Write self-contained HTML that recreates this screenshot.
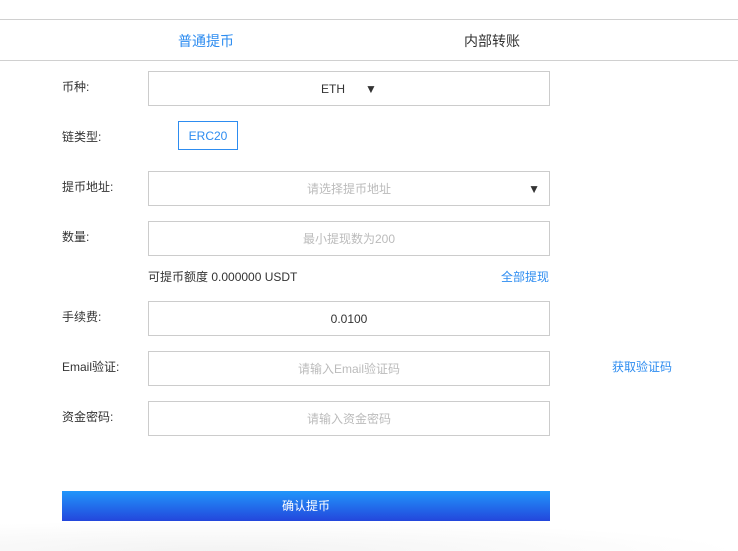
<!DOCTYPE html>
<html><head><meta charset="utf-8"><style>
*{margin:0;padding:0;box-sizing:border-box}
body{width:738px;height:551px;background:#fff;font-family:"Liberation Sans","Noto Sans CJK SC",sans-serif;position:relative;overflow:hidden;color:#333}
.a{position:absolute}
.line{left:0;width:738px;height:1px;background:#d0d0d0}
.lbl{left:62px;font-size:12px;color:#333}
.inp{left:148px;width:402px;height:35px;border:1px solid #ccc;font-size:12px;color:#bbb;text-align:center;line-height:34px}
</style></head><body>
<div class="a line" style="top:19px"></div>
<div class="a line" style="top:60px"></div>
<div class="a" style="left:178px;top:31px;font-size:14px;color:#2d8cf0">普通提币</div>
<div class="a" style="left:464px;top:31px;font-size:14px;color:#333">内部转账</div>

<div class="a lbl" style="top:78px">币种:</div>
<div class="a inp" style="top:71px;color:#333">ETH &nbsp;&nbsp;&nbsp;&nbsp;&nbsp;▼</div>

<div class="a lbl" style="top:128px">链类型:</div>
<div class="a" style="left:178px;top:121px;width:60px;height:29px;border:1px solid #2d8cf0;color:#2d8cf0;font-size:12px;text-align:center;line-height:28px">ERC20</div>

<div class="a lbl" style="top:178px">提币地址:</div>
<div class="a inp" style="top:171px">请选择提币地址<span class="a" style="right:9px;top:0;color:#333;font-size:12px">▼</span></div>

<div class="a lbl" style="top:228px">数量:</div>
<div class="a inp" style="top:221px">最小提现数为200</div>
<div class="a" style="left:148px;top:268px;font-size:12px;color:#333">可提币额度 0.000000 USDT</div>
<div class="a" style="left:501px;top:268px;font-size:12px;color:#2d8cf0">全部提现</div>

<div class="a lbl" style="top:308px">手续费:</div>
<div class="a inp" style="top:301px;color:#333">0.0100</div>

<div class="a lbl" style="top:358px">Email验证:</div>
<div class="a inp" style="top:351px">请输入Email验证码</div>
<div class="a" style="left:612px;top:358px;font-size:12px;color:#2d8cf0">获取验证码</div>

<div class="a lbl" style="top:408px">资金密码:</div>
<div class="a inp" style="top:401px">请输入资金密码</div>

<div class="a" style="left:62px;top:491px;width:488px;height:30px;background:linear-gradient(#2196fb,#2346dc);color:#fff;font-size:12px;text-align:center;line-height:30px">确认提币</div>
<div class="a" style="left:0;top:521px;width:738px;height:30px;background:radial-gradient(ellipse 70% 100% at 30% 100%,#f3f3f3,#fff)"></div>
</body></html>
